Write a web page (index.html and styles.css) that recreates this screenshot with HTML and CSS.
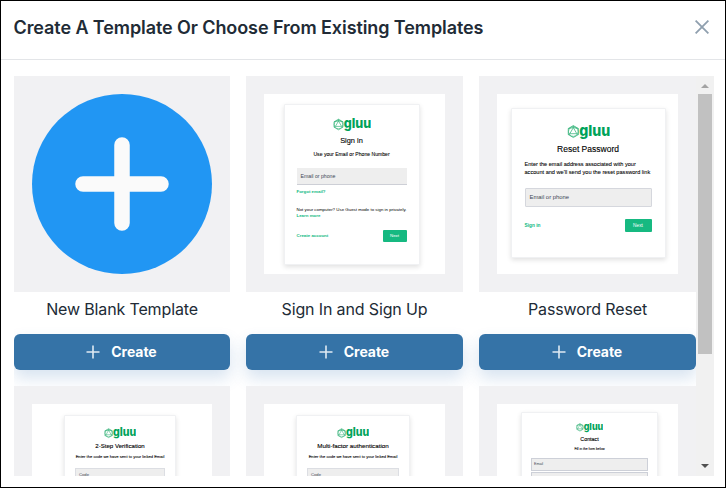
FILE: index.html
```html
<!DOCTYPE html>
<html lang="en">
<head>
<meta charset="utf-8">
<title>Create a template</title>
<link rel="stylesheet" href="styles.css">
</head>
<body>
<svg class="defs" width="0" height="0">
  <symbol id="gluu" viewBox="0 0 38 16">
    <g fill="none" stroke="#2fb176" stroke-width=".65">
      <path d="M5.5 3.2 L10 5.8 V11.2 L5.5 13.8 L1 11.2 V5.8 Z"/>
      <circle cx="5.5" cy="8.5" r="4.3"/>
      <path d="M5.5 5 L8.6 10.4 H2.4 Z M5.5 3.2 V5 M10 11.2 L8.6 10.4 M1 11.2 L2.4 10.4 M1 5.8 L5.5 5 L10 5.8"/>
    </g>
    <text class="logo-text" x="10.8" y="12.2" textLength="27.5" lengthAdjust="spacingAndGlyphs">gluu</text>
  </symbol>
  <symbol id="plus" viewBox="0 0 14 14"><path d="M7 .5 V13.5 M.5 7 H13.5" stroke="#dfeaf3" stroke-width="1.6" fill="none"/></symbol>
</svg>
<div class="modal">
  <header class="header">
    <h1>Create A Template Or Choose From Existing Templates</h1>
    <svg class="close" viewBox="0 0 14 14"><path d="M.6 .6 L13.4 13.4 M13.4 .6 L.6 13.4" stroke="#8f9fae" stroke-width="1.8" fill="none"/></svg>
  </header>
  <main class="scroller">
    <div class="grid">
      <article class="card">
        <div class="image">
          <svg class="blank" viewBox="0 0 180 180"><circle cx="90" cy="90" r="90" fill="#2196f3"/><path d="M90 51 V129 M51 90 H129" stroke="#fafafa" stroke-width="15.5" stroke-linecap="round"/></svg>
        </div>
        <h2 class="name">New Blank Template</h2>
        <button class="create"><svg><use href="#plus"/></svg><span>Create</span></button>
      </article>
      <article class="card">
        <div class="image"><div class="thumb">
          <div class="panel signin">
            <svg class="logo"><use href="#gluu"/></svg>
            <h3>Sign in</h3>
            <p class="sub">Use your Email or Phone Number</p>
            <div class="field">Email or phone</div>
            <p class="link forgot">Forgot email?</p>
            <p class="note">Not your computer? Use Guest mode to sign in privately.</p>
            <p class="link">Learn more</p>
            <div class="actions"><span class="link">Create account</span><span class="next">Next</span></div>
          </div>
        </div></div>
        <h2 class="name">Sign In and Sign Up</h2>
        <button class="create"><svg><use href="#plus"/></svg><span>Create</span></button>
      </article>
      <article class="card">
        <div class="image"><div class="thumb">
          <div class="panel reset">
            <svg class="logo"><use href="#gluu"/></svg>
            <h3>Reset Password</h3>
            <p class="sub">Enter the email address associated with your<br>account and we'll send you the reset password link</p>
            <div class="field">Email or phone</div>
            <div class="actions"><span class="link">Sign in</span><span class="next">Next</span></div>
          </div>
        </div></div>
        <h2 class="name">Password Reset</h2>
        <button class="create"><svg><use href="#plus"/></svg><span>Create</span></button>
      </article>
      <article class="card">
        <div class="image"><div class="thumb">
          <div class="panel twostep">
            <svg class="logo"><use href="#gluu"/></svg>
            <h3>2-Step Verification</h3>
            <p class="sub">Enter the code we have sent to your linked Email</p>
            <div class="field">Code</div>
          </div>
        </div></div>
      </article>
      <article class="card">
        <div class="image"><div class="thumb">
          <div class="panel mfa">
            <svg class="logo"><use href="#gluu"/></svg>
            <h3>Multi-factor authentication</h3>
            <p class="sub">Enter the code we have sent to your linked Email</p>
            <div class="field">Code</div>
          </div>
        </div></div>
      </article>
      <article class="card">
        <div class="image"><div class="thumb">
          <div class="panel contact">
            <svg class="logo"><use href="#gluu"/></svg>
            <h3>Contact</h3>
            <p class="sub">Fill in the form below</p>
            <div class="field">Email</div>
            <div class="field second"></div>
          </div>
        </div></div>
      </article>
    </div>
    <div class="scrollbar">
      <div class="arrow"><svg viewBox="0 0 8 4"><path d="M0 4 L4 0 L8 4 Z" fill="#a3a3a3"/></svg></div>
      <div class="handle"></div>
      <div class="arrow down"><svg viewBox="0 0 8 4"><path d="M0 0 H8 L4 4 Z" fill="#505050"/></svg></div>
    </div>
  </main>
</div>
</body>
</html>
```
FILE: styles.css
```css
* { box-sizing: border-box; }
body { margin: 0; background: #fff; font-family: Inter, "Liberation Sans", sans-serif; color: #212b36; }
h1, h2, h3, p { margin: 0; font-weight: 400; white-space: nowrap; }
.defs { display: none; }
.modal { width: 726px; height: 488px; border: 1px solid #000; overflow: hidden; }
.header { height: 59px; padding: 0 16px 5px 12.5px; border-bottom: 1px solid #e3e5e8; display: flex; align-items: center; justify-content: space-between; }
h1 { font-size: 18px; font-weight: 600; letter-spacing: -0.09px; }
.close { width: 14px; height: 14px; margin-bottom: 1px; }

.scroller { display: flex; width: 700px; height: 400px; margin: 16px 0 0 13px; overflow: hidden; }
.grid { width: 682px; height: 400px; overflow: hidden; display: grid; grid-template-columns: 216px 217px 217px; grid-auto-rows: 294px; gap: 16px; }
.card { display: flex; flex-direction: column; position: relative; }
.image { height: 216px; padding: 18px; background: #f1f1f3; flex: none; }
.blank { display: block; width: 180px; height: 180px; }
.thumb { height: 180px; background: #fff; display: flex; align-items: flex-start; }
.name { height: 42px; padding-bottom: 7px; line-height: 35px; font-size: 16px; letter-spacing: -0.14px; text-align: center; }
.create { height: 36px; border: 0; padding: 0 1px 0 0; border-radius: 6px; background: #3573a7; color: #fff; box-shadow: 0 8px 16px rgba(53, 115, 180, .2); display: flex; align-items: center; justify-content: center; gap: 11px; font: 700 14px Inter, sans-serif; letter-spacing: -0.05px; }
.create svg { width: 14px; height: 14px; }
.create span { margin-top: -2px; }

.scrollbar { width: 18px; background: #f1f1f1; display: flex; flex-direction: column; align-items: center; }
.arrow { height: 18px; padding: 8px 0 0; flex: none; }
.arrow svg { display: block; width: 8px; height: 4px; }
.arrow.down { margin-top: auto; height: 20px; }
.handle { width: 14px; height: 260px; background: #c1c1c1; }

.panel { background: #fff; color: #000; height: 176px; border: 1px solid #f0f1f3; border-radius: 1px; box-shadow: 0 2px 5px rgba(0, 0, 0, .12); font-family: "Liberation Sans", sans-serif; display: flex; flex-direction: column; }
.logo { display: block; align-self: center; flex: none; }
.logo-text { font: 800 13.5px Inter, sans-serif; fill: #00a35a; }
.panel h3 { text-align: center; line-height: 10px; -webkit-text-stroke: .12px #000; }
.sub { text-align: center; line-height: 8px; -webkit-text-stroke: .08px #000; }
.field { background: #eee; border-bottom: 1px solid #cdcfd6; color: #3e4856; flex: none; }
.link { color: #10b981; font-weight: 700; }
.actions { display: flex; align-items: center; justify-content: space-between; }
.next { background: #16b981; color: #fff; border-radius: 1px; text-align: center; }

.signin { width: 136px; height: 161px; margin: 10px 0 0 19.5px; padding: 11px 12px 0; }
.signin .logo { width: 38px; height: 16px; }
.signin h3 { font-size: 7.4px; margin-top: 4px; }
.signin .sub { font-size: 5.1px; margin-top: 4px; }
.signin .field { height: 17px; margin-top: 10px; padding-left: 4px; line-height: 17px; font-size: 5.2px; }
.signin .link { font-size: 4.4px; line-height: 6px; }
.signin .forgot { margin-top: 4px; }
.signin .note { font-size: 4.4px; line-height: 6px; margin-top: 12px; }
.signin .actions { margin-top: 11px; }
.signin .next { width: 24px; height: 12px; line-height: 12px; font-size: 4.4px; }

.reset { width: 155px; height: 150px; margin: 14px 0 0 13.5px; padding: 13px 13px 0; }
.reset .logo { width: 43px; height: 18px; }
.reset h3 { font-size: 8.5px; margin-top: 4px; }
.reset .sub { text-align: left; font-size: 5.6px; margin-top: 6px; }
.reset .field { height: 19px; margin-top: 12px; border: 1px solid #d5d7dd; border-radius: 1px; padding-left: 4px; line-height: 17px; font-size: 5.9px; }
.reset .actions { margin-top: 12px; }
.reset .link { font-size: 4.8px; }
.reset .next { width: 27px; height: 13px; line-height: 13px; font-size: 4.8px; }

.twostep { width: 112px; margin: 11px 0 0 32px; padding: 10px 10px 0; }
.twostep .logo, .mfa .logo { width: 32px; height: 13.5px; }
.twostep h3 { font-size: 6.1px; margin-top: 1.5px; }
.twostep .sub, .mfa .sub { font-size: 4.1px; margin-top: 2px; }
.twostep .field, .mfa .field { height: 15px; margin-top: 7px; padding-left: 3px; line-height: 12px; font-size: 4.2px; border: 1px solid #dcdee3; }

.mfa { width: 114px; margin: 11px 0 0 32px; padding: 10px 10px 0; }
.mfa h3 { font-size: 6.25px; margin-top: 1.5px; }

.contact { width: 137px; margin: 8px 0 0 24px; padding: 8px 9px 0; }
.contact .logo { width: 27px; height: 12px; }
.contact h3 { font-size: 5.3px; margin-top: 1px; }
.contact .sub { font-size: 3.3px; margin-top: 1px; }
.contact .field { height: 13px; margin-top: 5px; padding-left: 2px; line-height: 11px; font-size: 3.6px; border: 1px solid #cdd0d8; }
.contact .second { margin-top: 1px; }
```
